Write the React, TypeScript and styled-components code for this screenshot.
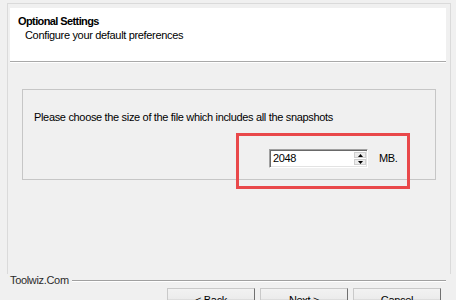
import styled, { createGlobalStyle } from 'styled-components'

const GlobalStyle = createGlobalStyle`
  html, body {
    margin: 0;
    padding: 0;
    background: #f0f0f0;
  }
  body {
    font-family: "Liberation Sans", Arial, sans-serif;
    font-size: 11px;
    letter-spacing: -0.33px;
    color: #000;
  }
`

const Page = styled.div`
  position: relative;
  width: 456px;
  height: 300px;
  overflow: hidden;
  background: #f0f0f0;
  display: flex;
  flex-direction: column;
  box-sizing: border-box;

  & > * {
    flex-shrink: 0;
  }
`

const Frame = styled.div`
  margin: 3px 5px 0 7px;
  height: 271px;
  box-sizing: border-box;
  border: 1px solid #dadada;
  border-bottom: none;
  padding: 4px 4px 0 2px;
  display: flex;
  flex-direction: column;
`

const Header = styled.div`
  height: 54px;
  box-sizing: border-box;
  background: #fff;
  border-bottom: 1px solid #a9a9a9;
  box-shadow: 0 1px 0 #fff;
  padding: 6px 0 0 8px;
  line-height: 14px;
`

const Title = styled.div`
  font-weight: bold;
  letter-spacing: -0.6px;
`

const Subtitle = styled.div`
  padding-left: 7px;
`

const GroupBox = styled.div`
  margin: 27px 0 0 12px;
  width: 414px;
  height: 91px;
  box-sizing: border-box;
  border: 1px solid #c6c6c6;
  padding: 21px 0 0 11px;
`

const Prompt = styled.div`
  line-height: 13px;
`

const SizeRow = styled.div`
  display: flex;
  align-items: center;
  margin: 25px 0 0 235px;
  gap: 11px;
`

const SpinBox = styled.div`
  display: flex;
  align-items: stretch;
  width: 99px;
  height: 19px;
  box-sizing: border-box;
  background: #fff;
  border-style: solid;
  border-width: 1px;
  border-color: #a0a0a0 #fff #fff #a0a0a0;
  box-shadow: inset 1px 1px 0 #696969, inset -1px -1px 0 #e3e3e3;
  padding: 2px 1px 2px 2px;
`

const SpinValue = styled.div`
  flex: 1;
  line-height: 13px;
  padding-left: 1px;
`

const SpinButtons = styled.div`
  width: 12px;
  display: flex;
  flex-direction: column;
  gap: 1px;
`

const SpinButton = styled.div`
  flex: 1;
  display: flex;
  align-items: center;
  justify-content: center;
  background: #ececec;
  border: 1px solid #cfcfcf;
  box-sizing: border-box;
`

const Unit = styled.div`
  line-height: 13px;
`

const Highlight = styled.div`
  position: absolute;
  left: 236px;
  top: 133px;
  width: 174px;
  height: 56px;
  box-sizing: border-box;
  border: 3px solid #e9484a;
  pointer-events: none;
`

const Footer = styled.div`
  display: flex;
  align-items: center;
  height: 13px;
  padding: 0 10px;
`

const Brand = styled.div`
  color: #2b2b2b;
  line-height: 13px;
`

const Rule = styled.div`
  flex: 1;
  height: 1px;
  background: #a0a0a0;
  box-shadow: 0 1px 0 #fff;
  margin-left: 3px;
  margin-top: -1px;
`

const ButtonRow = styled.div`
  display: flex;
  justify-content: flex-end;
  gap: 5px;
  padding-right: 15px;
  margin-top: 1px;
`

const Button = styled.button`
  width: 88px;
  height: 23px;
  box-sizing: border-box;
  font-family: "Liberation Sans", Arial, sans-serif;
  font-size: 11px;
  letter-spacing: -0.33px;
  color: #000;
  background: linear-gradient(#f2f2f2, #ebebeb 50%, #dddddd 50%, #d5d5d5);
  border: 1px solid;
  border-color: #c9c9c9 #707070 #707070 #c9c9c9;
  border-radius: 0;
  padding: 0;
`

const Arrow = ({ up }: { up?: boolean }) => (
  <svg width="5" height="3" viewBox="0 0 5 3">
    <polygon points={up ? '2.5,0 5,3 0,3' : '0,0 5,0 2.5,3'} fill="#000" />
  </svg>
)

const App = () => {
  return (
    <Page>
      <GlobalStyle />
      <Frame>
        <Header>
          <Title>Optional Settings</Title>
          <Subtitle>Configure your default preferences</Subtitle>
        </Header>
        <GroupBox>
          <Prompt>Please choose the size of the file which includes all the snapshots</Prompt>
          <SizeRow>
            <SpinBox>
              <SpinValue>2048</SpinValue>
              <SpinButtons>
                <SpinButton>
                  <Arrow up />
                </SpinButton>
                <SpinButton>
                  <Arrow />
                </SpinButton>
              </SpinButtons>
            </SpinBox>
            <Unit>MB.</Unit>
          </SizeRow>
        </GroupBox>
      </Frame>
      <Footer>
        <Brand>Toolwiz.Com</Brand>
        <Rule />
      </Footer>
      <ButtonRow>
        <Button>&lt; Back</Button>
        <Button>Next &gt;</Button>
        <Button>Cancel</Button>
      </ButtonRow>
      <Highlight />
    </Page>
  )
}

export default App
